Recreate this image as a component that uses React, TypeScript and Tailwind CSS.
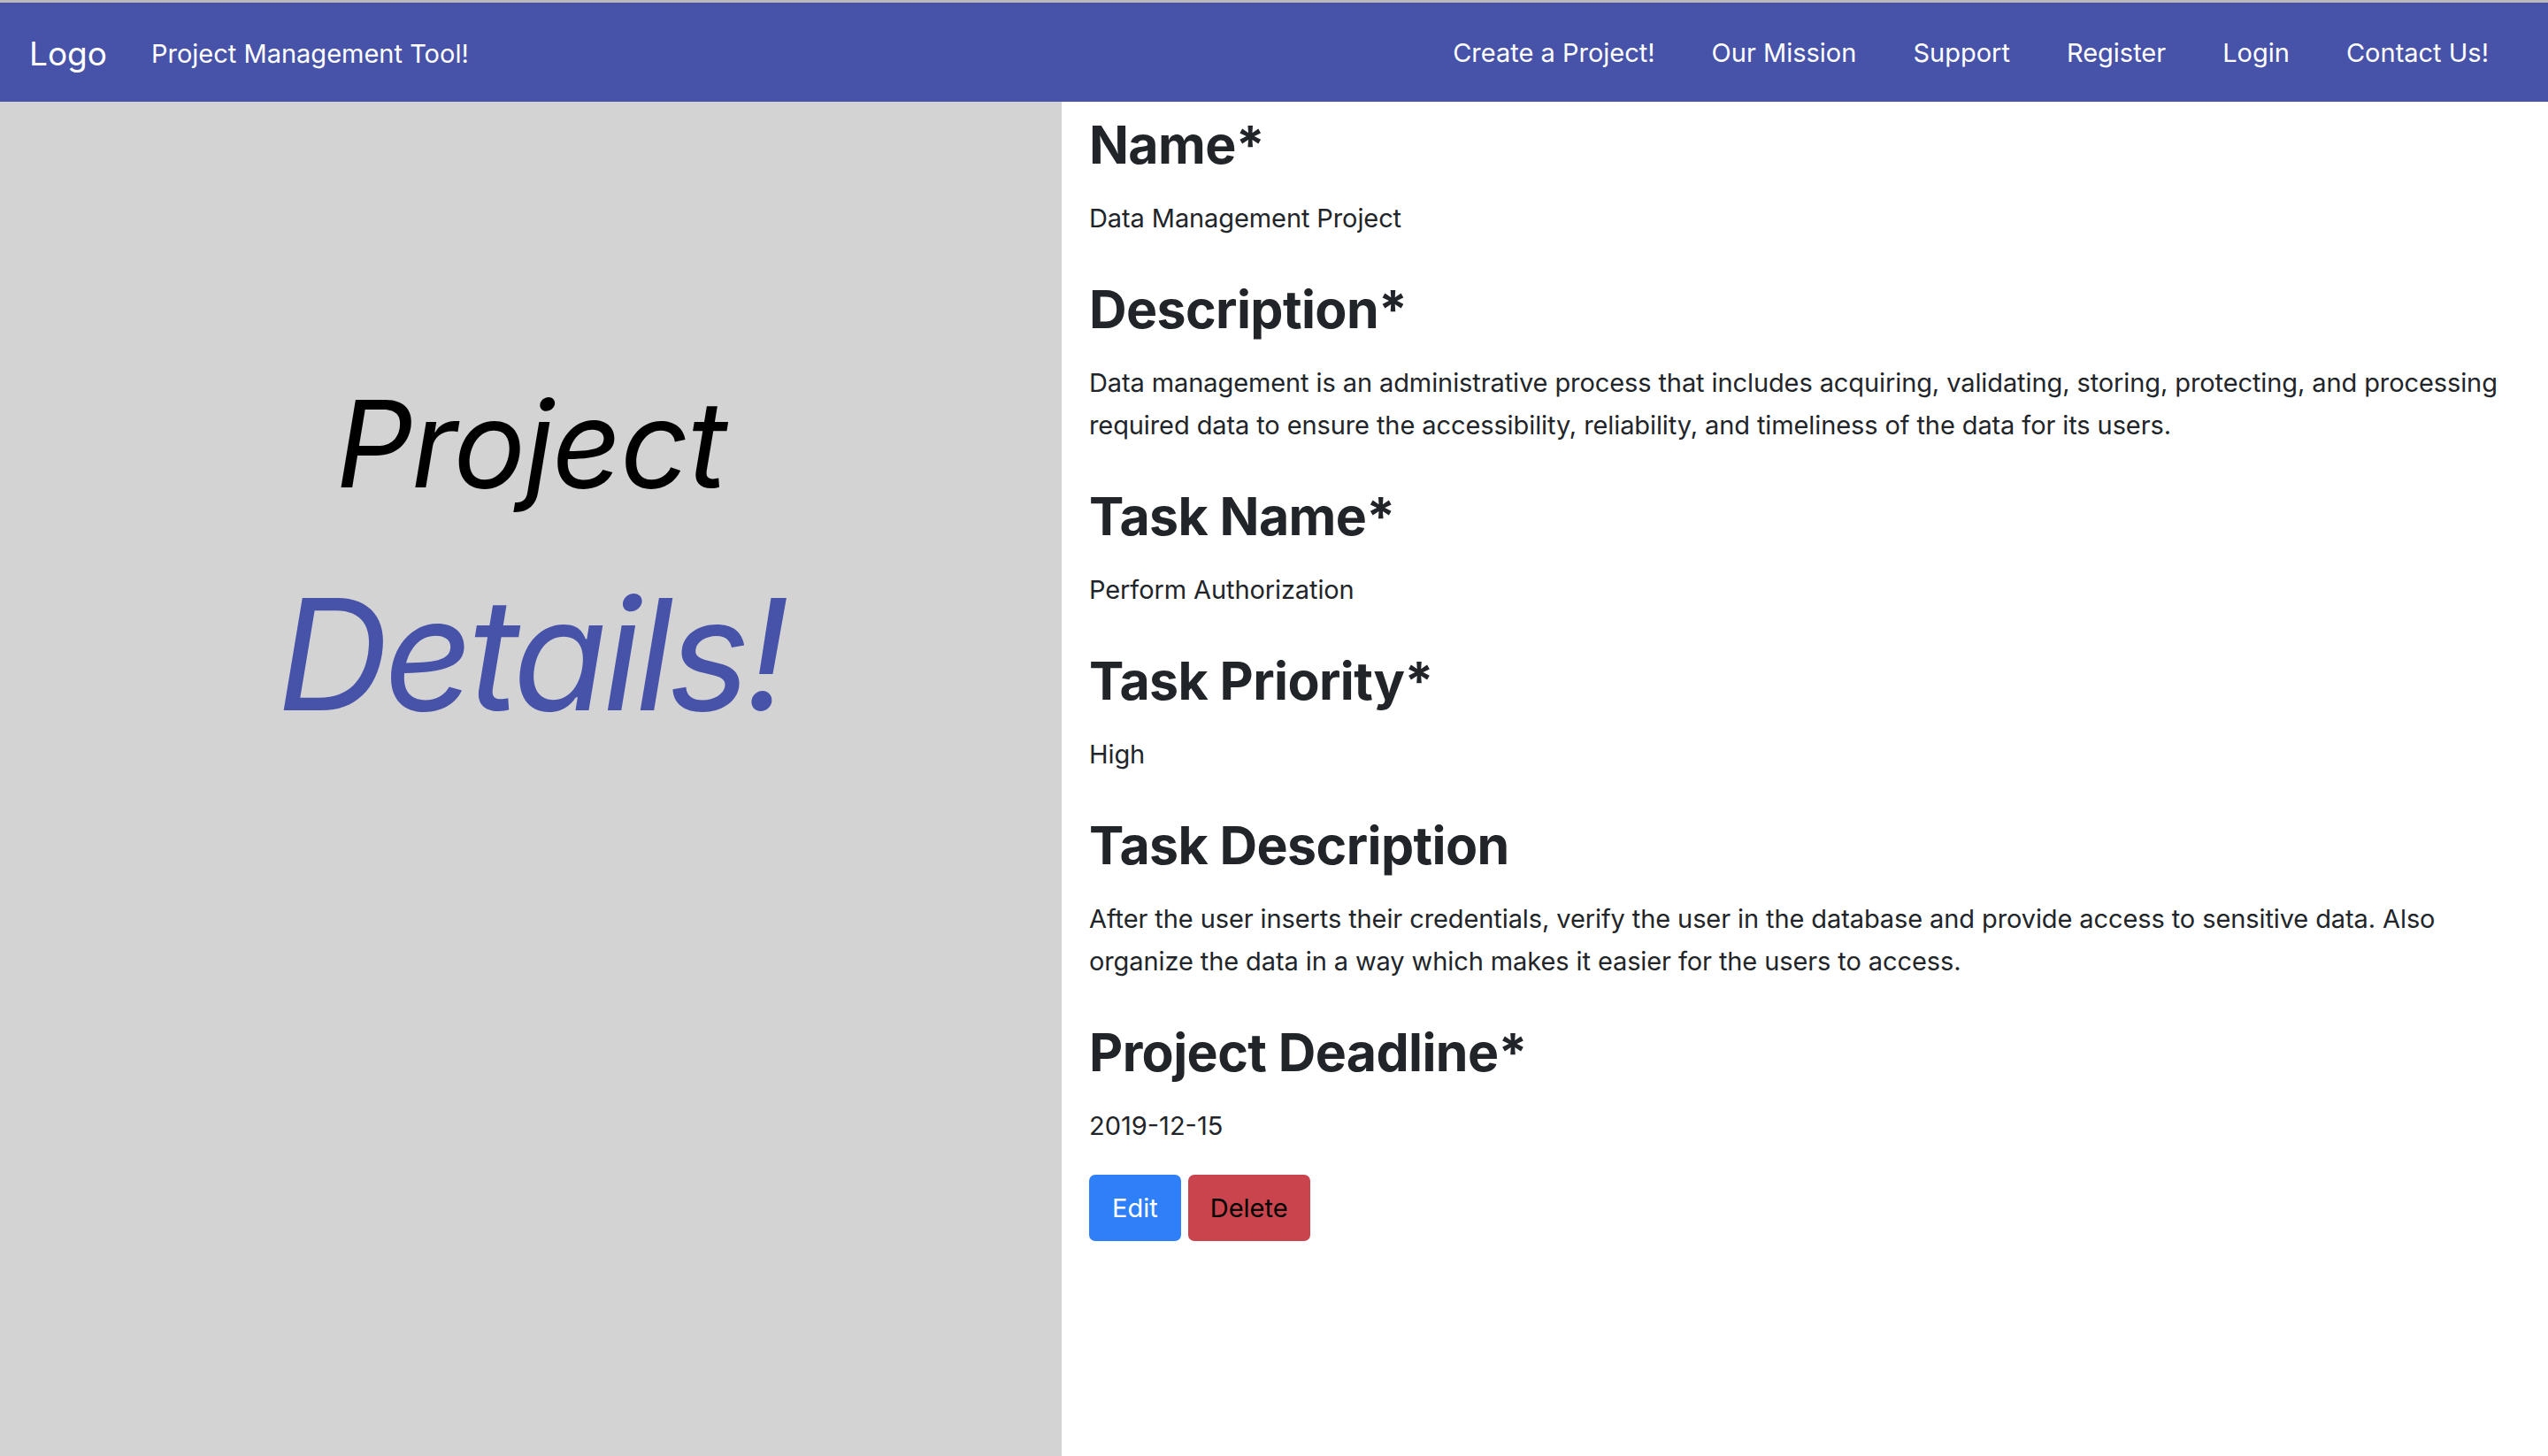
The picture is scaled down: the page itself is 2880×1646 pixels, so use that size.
const navLinks = [
  "Create a Project!",
  "Our Mission",
  "Support",
  "Register",
  "Login",
  "Contact Us!",
];

const details = [
  { label: "Name*", value: ["Data Management Project"] },
  {
    label: "Description*",
    value: [
      "Data management is an administrative process that includes acquiring, validating, storing, protecting, and processing required data to ensure the accessibility, reliability, and timeliness of the data for its users.",
    ],
  },
  { label: "Task Name*", value: ["Perform Authorization"] },
  { label: "Task Priority*", value: ["High"] },
  {
    label: "Task Description",
    value: [
      "After the user inserts their credentials, verify the user in the database and provide access to sensitive data. Also organize the data in a way which makes it easier for the users to access.",
    ],
  },
];

const App = () => {
  return (
    <div className="min-h-screen border-t-[3px] border-[#b9b9b9] bg-white font-['Inter',sans-serif] text-[#212529]">
      <nav className="flex h-[112px] items-center bg-[#4752a9] pl-[33px] pr-[35px] pt-[3px] text-white">
        <a className="text-[37px] leading-none" href="#">
          Logo
        </a>
        <a className="ml-[50px] text-[29px] leading-none" href="#">
          Project Management Tool!
        </a>
        <ul className="ml-auto flex items-center">
          {navLinks.map((link) => (
            <li key={link}>
              <a className="inline-block px-[32px] text-[29px] leading-none" href="#">
                {link}
              </a>
            </li>
          ))}
        </ul>
      </nav>

      <div className="flex min-h-[1531px]">
        <div className="flex w-[1200px] shrink-0 flex-col items-center bg-[#d3d3d3] pt-[305px]">
          <h1 className="text-[136px] leading-[163px] tracking-[-1.5px] italic text-black">
            Project
          </h1>
          <h1 className="mt-[51px] text-[175px] leading-[210px] tracking-[-5.5px] italic text-[#4752a9]">
            Details!
          </h1>
        </div>

        <div className="flex-1 pl-[31px] pr-[32px] pt-[13px]">
          {details.map((item) => (
            <div key={item.label}>
              <h2 className="mb-[24px] text-[59px] leading-[71px] tracking-[-0.6px] font-bold">
                {item.label}
              </h2>
              <p className="mb-[43px] text-[29px] leading-[48px] tracking-[-0.1px]">
                {item.value}
              </p>
            </div>
          ))}
          <h2 className="mb-[24px] text-[59px] leading-[71px] tracking-[-0.6px] font-bold">
            Project Deadline*
          </h2>
          <p className="mb-[31px] text-[29px] leading-[48px]">2019-12-15</p>
          <div className="flex gap-[8px]">
            <button className="h-[75px] rounded-[7px] bg-[#2e7ff8] px-[26px] text-[29px] text-white">
              Edit
            </button>
            <button className="h-[75px] rounded-[7px] bg-[#c9444c] px-[25px] text-[29px] text-black">
              Delete
            </button>
          </div>
        </div>
      </div>
    </div>
  );
};

export default App;
